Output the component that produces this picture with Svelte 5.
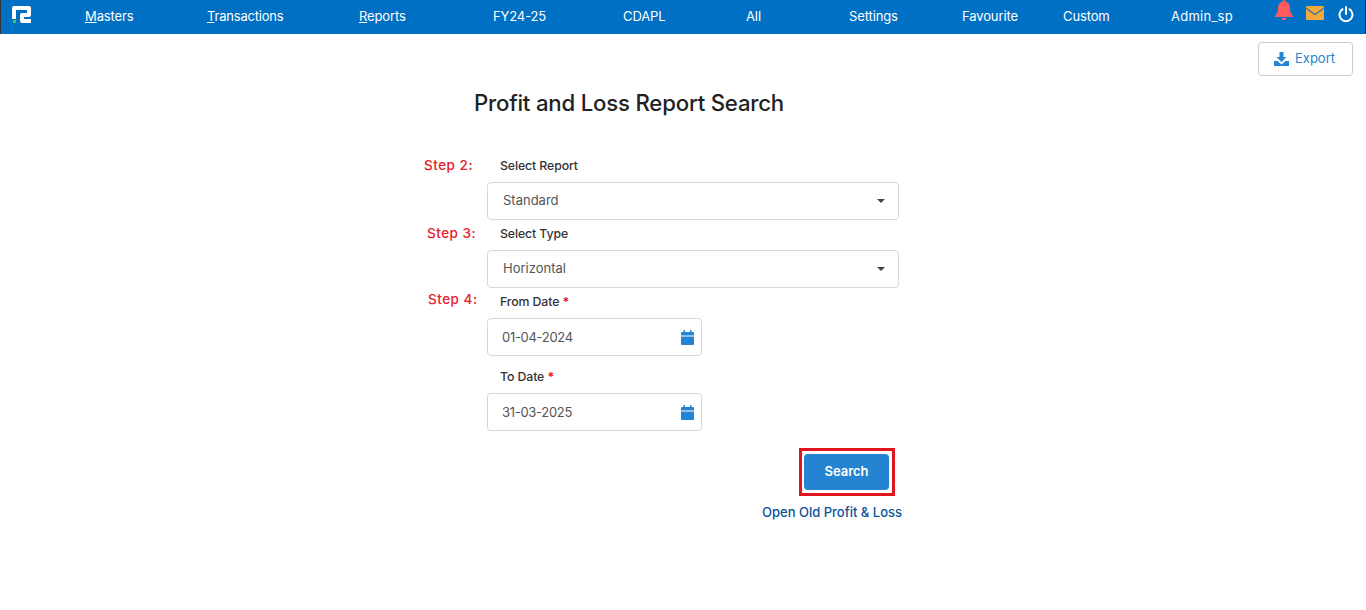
<script>
  const nav = [
    { pre: 'M', rest: 'asters' },
    { pre: 'T', rest: 'ransactions' },
    { pre: 'R', rest: 'eports' },
    { pre: '', rest: 'FY24-25' },
    { pre: '', rest: 'CDAPL' },
    { pre: '', rest: 'All' },
    { pre: '', rest: 'Settings' },
    { pre: '', rest: 'Favourite' },
    { pre: '', rest: 'Custom' },
    { pre: '', rest: 'Admin_sp' }
  ];
</script>

<header class="top">
  <svg class="logo" width="19" height="18" viewBox="0 0 19 18">
    <path fill="#fff" d="M0 2a2 2 0 0 1 2-2h15a2 2 0 0 1 2 2v7a2 2 0 0 1-2 2h-5v2h7v4h-9a2 2 0 0 1-2-2V9a2 2 0 0 1 2-2h5V4H4v9H0z"/>
    <rect x="1" y="14" width="3" height="3" fill="#2fd34e"/>
  </svg>
  {#each nav as n}
    <a class="nav-item"><u>{n.pre}</u>{n.rest}</a>
  {/each}
  <svg class="ic bell" width="20" height="20" viewBox="0 0 20 20">
    <path fill="#ff5a5f" d="M10 0a1.6 1.6 0 0 1 1.6 1.7C14.5 2.4 16 5 16 8c0 4 1 6 3 8v1H1v-1c2-2 3-4 3-8 0-3 1.500-5.600 4.400-6.300A1.600 1.600 0 0 1 10 0zM7.800 18h4.400a2.200 2.200 0 0 1-4.400 0z"/>
  </svg>
  <svg class="ic" width="18" height="14" viewBox="0 0 18 14">
    <rect width="18" height="14" rx="1.500" fill="#f5a93a"/>
    <path d="M0.500 2.500 9 8.500l8.500-6" fill="none" stroke="#2a6fb0" stroke-width="1.200"/>
  </svg>
  <svg class="ic power" width="16" height="16" viewBox="0 0 16 16">
    <path d="M4.500 3.200a6.500 6.500 0 1 0 7 0" fill="none" stroke="#fff" stroke-width="2" stroke-linecap="round"/>
    <path d="M8 1v7" stroke="#fff" stroke-width="2" stroke-linecap="round"/>
  </svg>
</header>

<main class="page">
  <div class="toolbar">
    <button class="export">
      <svg width="15" height="14" viewBox="0 0 15 14">
        <path fill="#2584d2" d="M5.500 0h4v5h3L7.500 10 2.500 5h3z"/>
        <path fill="#2584d2" d="M0 9h3.500l4 3.500L11.500 9H15v5H0z"/>
      </svg>
      Export
    </button>
  </div>

  <h1>Profit and Loss Report Search</h1>

  <form class="form">
    <div class="row">
      <span class="step s2">Step 2:</span>
      <label>Select Report</label>
    </div>
    <div class="select">Standard<i class="caret"></i></div>

    <div class="row">
      <span class="step s3">Step 3:</span>
      <label>Select Type</label>
    </div>
    <div class="select">Horizontal<i class="caret"></i></div>

    <div class="row">
      <span class="step s4">Step 4:</span>
      <label>From Date <b>*</b></label>
    </div>
    <div class="date">01-04-2024
      <svg width="13" height="15" viewBox="0 0 13 15"><path fill="#2584d2" d="M2.500 0h1.500v2h5V0h1.500v2H12a1 1 0 0 1 1 1v2.500H0V3a1 1 0 0 1 1-1h1.500zM0 6.500h13V14a1 1 0 0 1-1 1H1a1 1 0 0 1-1-1z"/></svg>
    </div>

    <div class="row second">
      <label>To Date <b>*</b></label>
    </div>
    <div class="date">31-03-2025
      <svg width="13" height="15" viewBox="0 0 13 15"><path fill="#2584d2" d="M2.500 0h1.500v2h5V0h1.500v2H12a1 1 0 0 1 1 1v2.500H0V3a1 1 0 0 1 1-1h1.500zM0 6.500h13V14a1 1 0 0 1-1 1H1a1 1 0 0 1-1-1z"/></svg>
    </div>

    <div class="actions">
      <div class="highlight"><button type="button" class="search">Search</button></div>
      <a class="old">Open Old Profit &amp; Loss</a>
    </div>
  </form>
</main>

<style>
  :global(body) {
    margin: 0;
    background: #fff;
    font-family: "Open Sans", "Liberation Sans", sans-serif;
  }
  .top {
    height: 34px;
    box-sizing: border-box;
    background: #0070c4;
    border-left: 1px solid #333;
    border-right: 1px solid #333;
    display: grid;
    grid-template-columns: 84px 122px 152px 134px 130px 123px 103px 113px 101px 108px 103px 32px 32px 1fr;
    align-items: center;
    color: #fff;
    font-family: "Inter", sans-serif;
  }
  .logo {
    margin: -4px 0 0 11px;
  }
  .nav-item {
    font-size: 13px;
    color: #fff;
    white-space: nowrap;
    margin-top: -3px;
    letter-spacing: -0.12px;
  }
  .nav-item:nth-of-type(2) {
    letter-spacing: -0.2px;
  }
  .nav-item:nth-of-type(10) {
    letter-spacing: 0.25px;
  }
  .ic {
    margin-top: -9px;
    align-self: center;
  }
  .bell {
    margin-top: -14px;
  }
  .power {
    margin-top: -7px;
  }
  .page {
    height: 576px;
    box-sizing: border-box;
    overflow: hidden;
  }
  .toolbar {
    display: flex;
    justify-content: flex-end;
    padding: 8px 13px 0 0;
  }
  .export {
    width: 95px;
    height: 34px;
    box-sizing: border-box;
    background: #fff;
    border: 1px solid #ccc;
    border-radius: 4px;
    color: #2584d2;
    font: 13px "Inter", sans-serif;
    display: flex;
    align-items: center;
    justify-content: center;
    gap: 6px;
    padding: 0 2px 2px 0;
  }
  .export svg {
    margin-top: 2px;
  }
  h1 {
    margin: 12px 0 0 474px;
    font: 500 22.200px/30px "Inter", sans-serif;
    color: #222;
    letter-spacing: -0.2px;
  }
  .form {
    margin: 34px 0 0 487px;
    width: 412px;
    display: flex;
    flex-direction: column;
    font-family: "Inter", sans-serif;
  }
  .row {
    position: relative;
    height: 30px;
    box-sizing: border-box;
    padding: 6px 0 0 13px;
    font-size: 12.300px;
  }
  .row.second {
    height: 37px;
    padding-top: 13px;
  }
  label {
    color: #333;
    font-weight: 450;
    letter-spacing: -0.1px;
  }
  label b {
    color: #e8101c;
  }
  .step {
    position: absolute;
    top: 5px;
    color: #e8202a;
    font: 500 13.500px "Inter", sans-serif;
    letter-spacing: 0.5px;
    white-space: nowrap;
  }
  .s2 { left: -63px; }
  .s3 { left: -60px; }
  .s4 { left: -59px; top: 3px; }
  .select,
  .date {
    height: 38px;
    box-sizing: border-box;
    border: 1px solid #d8d8d8;
    border-radius: 4px;
    display: flex;
    align-items: center;
    justify-content: space-between;
    font-size: 13px;
    color: #555;
    background: #fff;
  }
  .select {
    padding-left: 15px;
    padding-right: 13px;
    padding-bottom: 2px;
  }
  .date {
    width: 215px;
    padding-left: 14px;
    padding-right: 7px;
    letter-spacing: -0.3px;
  }
  .caret {
    width: 0;
    height: 0;
    margin-top: 2px;
    border-left: 4px solid transparent;
    border-right: 4px solid transparent;
    border-top: 4px solid #444;
  }
  .actions {
    display: flex;
    flex-direction: column;
    align-items: flex-end;
    margin-top: 17px;
  }
  .highlight {
    margin-right: 4px;
    border: 3px solid #e2141f;
    padding: 3px 3px 3px 2px;
    line-height: 0;
  }
  .search {
    width: 85px;
    height: 36px;
    border: 0;
    border-radius: 4px;
    background: #2584d2;
    color: #fff;
    font: 600 13px "Inter", sans-serif;
    padding: 0 0 2px;
  }
  .old {
    margin: 7px -3px 0 0;
    font-size: 13px;
    font-weight: 500;
    color: #0a5298;
    line-height: 18px;
  }
</style>
